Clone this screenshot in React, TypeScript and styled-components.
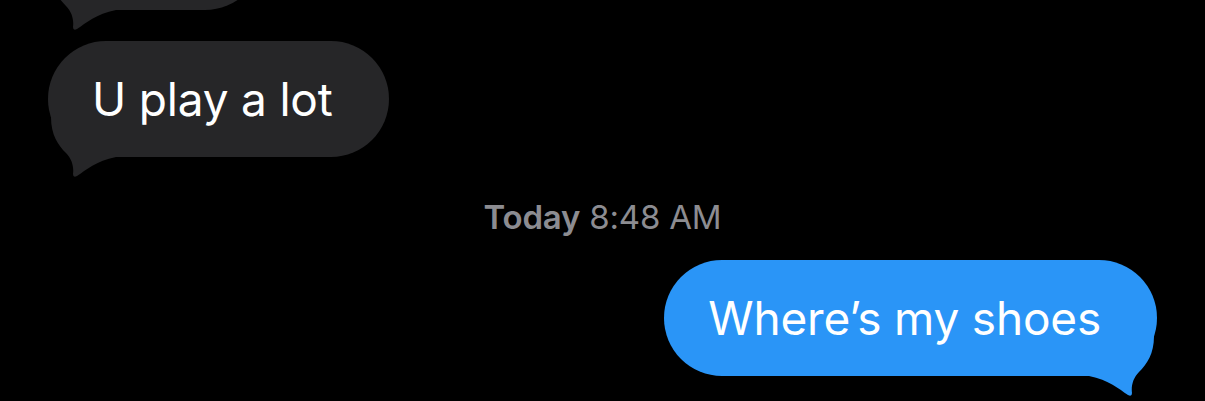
import React from 'react'
import styled, { createGlobalStyle } from 'styled-components'

type Side = 'left' | 'right'

interface Message {
  id: number
  side: Side
  text: string
  width?: number
}

const GlobalStyle = createGlobalStyle`
  html, body {
    margin: 0;
    padding: 0;
    background: #000;
  }
  body {
    font-family: Inter, "Noto Sans", "Liberation Sans", sans-serif;
    -webkit-font-smoothing: antialiased;
  }
`

const Thread = styled.div`
  height: 401px;
  overflow: hidden;
  display: flex;
  flex-direction: column;
  padding: 0 48px;
  box-sizing: border-box;
  background: #000;
`

const Row = styled.div<{ $side: Side; $top: number }>`
  display: flex;
  justify-content: ${p => (p.$side === 'left' ? 'flex-start' : 'flex-end')};
  margin-top: ${p => p.$top}px;
  flex-shrink: 0;
`

const Bubble = styled.div<{ $side: Side; $width?: number }>`
  position: relative;
  height: 116px;
  width: ${p => (p.$width ? `${p.$width}px` : 'auto')};
  box-sizing: border-box;
  padding: 0 56px 0 44px;
  border-radius: 58px;
  display: flex;
  align-items: center;
  background: ${p => (p.$side === 'left' ? '#262628' : '#2A95F7')};
  color: #fff;
  font-size: 46px;
  letter-spacing: -0.2px;
  white-space: nowrap;
`

const BubbleText = styled.span`
  position: relative;
  z-index: 1;
`

const Tail = styled.svg<{ $side: Side }>`
  position: absolute;
  bottom: -20px;
  width: 70px;
  height: 60px;
  ${p => (p.$side === 'left' ? 'left: 0;' : 'right: 0; transform: scaleX(-1);')}
  fill: ${p => (p.$side === 'left' ? '#262628' : '#2A95F7')};
`

const Stamp = styled.div`
  margin-top: 40px;
  text-align: center;
  font-size: 33px;
  line-height: 40px;
  color: #8c8c91;
  letter-spacing: -0.2px;
`

const StampDay = styled.span`
  font-weight: 600;
`

const BubbleTail: React.FC<{ side: Side }> = ({ side }) => (
  <Tail $side={side} viewBox='0 0 70 60'>
    <path d='M 3 0 C 3 18, 10 28, 18 36 C 24 42, 26 50, 25 57 Q 25 61, 29 59 C 38 53, 48 44, 68 40 L 68 0 Z' />
  </Tail>
)

const MessageBubble: React.FC<{ msg: Message; top: number }> = ({ msg, top }) => (
  <Row $side={msg.side} $top={top}>
    <Bubble $side={msg.side} $width={msg.width}>
      <BubbleText>{msg.text}</BubbleText>
      <BubbleTail side={msg.side} />
    </Bubble>
  </Row>
)

const earlier: Message[] = [
  { id: 1, side: 'left', text: '', width: 215 },
  { id: 2, side: 'left', text: 'U play a lot' }
]

const latest: Message[] = [
  { id: 3, side: 'right', text: 'Where’s my shoes' }
]

export default function App () {
  return (
    <>
      <GlobalStyle />
      <Thread>
        {earlier.map((msg, i) => (
          <MessageBubble key={msg.id} msg={msg} top={i === 0 ? -106 : 31} />
        ))}
        <Stamp>
          <StampDay>Today</StampDay> 8:48 AM
        </Stamp>
        {latest.map(msg => (
          <MessageBubble key={msg.id} msg={msg} top={23} />
        ))}
      </Thread>
    </>
  )
}
